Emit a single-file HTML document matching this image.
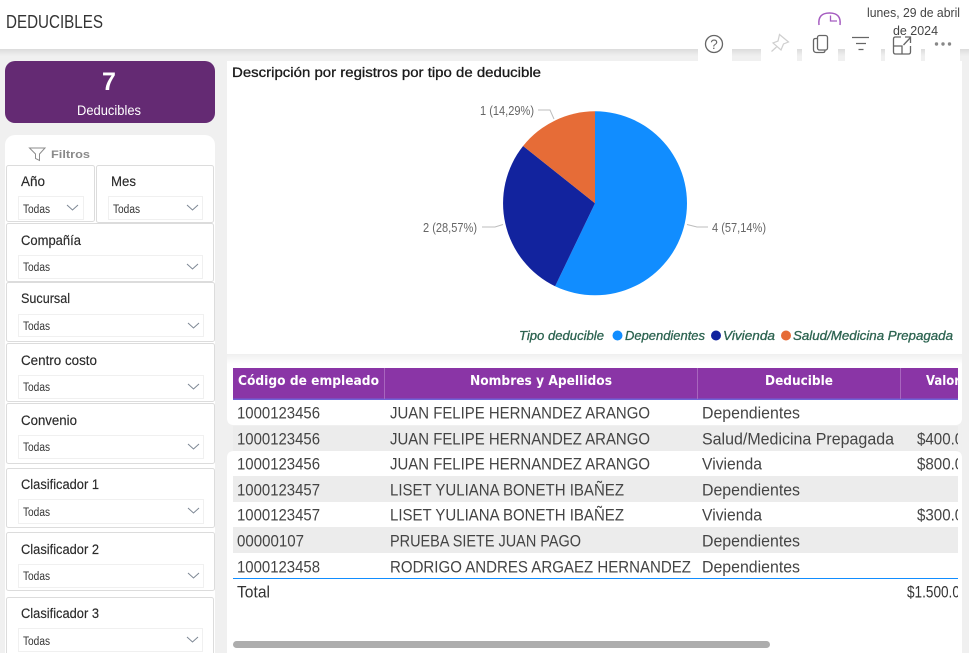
<!DOCTYPE html>
<html lang="es"><head><meta charset="utf-8"><title>Deducibles</title>
<style>
html,body{margin:0;padding:0;background:#f0f0f0;width:969px;height:653px;overflow:hidden}
svg{display:block}
text{font-family:"Liberation Sans",sans-serif}
.r{font-size:16.500px;fill:#444;font-weight:400}
.h{font-family:"DejaVu Sans",sans-serif;font-size:13px;font-weight:700;fill:#fff}
.l{font-size:13.500px;fill:#2a2a2a;stroke:#2a2a2a;stroke-width:.15}
.t{font-size:11.500px;fill:#333}
.c{fill:none;stroke:#7d8794;stroke-width:1}
.s{fill:#fff;stroke:#dcdcdc;stroke-width:1}
.d{fill:#fff;stroke:#f0f0f0;stroke-width:1}
.p{font-size:12.500px;fill:#666}
.g{font-size:13px;font-style:italic;fill:#2c6350;font-weight:400;stroke:#2c6350;stroke-width:.3}
.i{fill:none;stroke:#666;stroke-width:1.300}
</style></head><body>
<svg width="969" height="653" viewBox="0 0 969 653" xmlns="http://www.w3.org/2000/svg">
<defs>
<clipPath id="cv"><rect x="233" y="360" width="725" height="260"/></clipPath>
<linearGradient id="sh" x1="0" y1="0" x2="0" y2="1"><stop offset="0" stop-color="#dcdcdc"/><stop offset="1" stop-color="#f0f0f0"/></linearGradient>
<linearGradient id="sh2" x1="0" y1="0" x2="0" y2="1"><stop offset="0" stop-color="#efefef"/><stop offset="1" stop-color="#ffffff"/></linearGradient>
</defs>
<rect width="969" height="653" fill="#f0f0f0"/>
<rect y="49" width="969" height="7" fill="url(#sh)"/>
<rect width="969" height="49" fill="#fff"/>
<text x="6" y="28" font-size="18.500" fill="#333" textLength="97" lengthAdjust="spacingAndGlyphs">DEDUCIBLES</text>

<!-- toolbar patches -->
<rect x="698" y="30" width="34" height="31" fill="#fff"/>
<rect x="761" y="30" width="36" height="31" fill="#fff"/>
<rect x="802" y="30" width="36" height="31" fill="#fff"/>
<rect x="845" y="30" width="36" height="31" fill="#fff"/>
<rect x="885" y="30" width="36" height="31" fill="#fff"/>
<rect x="925" y="30" width="35" height="31" fill="#fff"/>

<!-- date + clock -->
<text x="867" y="17" font-size="12.500" fill="#444" textLength="93" lengthAdjust="spacingAndGlyphs">lunes, 29 de abril</text>
<text x="893" y="35" font-size="12.500" fill="#444" textLength="45" lengthAdjust="spacingAndGlyphs">de 2024</text>
<path d="M819 25Q817.500 13 829.500 13Q841.500 13 840 25" fill="none" stroke="#a55cc0" stroke-width="1.500"/>
<path d="M830.500 15.500V21H837" fill="none" stroke="#a55cc0" stroke-width="1.300"/>

<!-- toolbar icons -->
<circle cx="714" cy="44" r="8.500" class="i"/>
<text x="714" y="49" font-size="13.500" fill="#666" text-anchor="middle">?</text>
<path d="M779.500 34.500L788.500 42L783.500 44L781 50L773 43L778 41ZM776.500 47L771.500 51.500" fill="none" stroke="#cfcfcf" stroke-width="1.200"/>
<rect x="817.500" y="35.500" width="10" height="14.500" rx="2" class="i"/>
<path d="M817.500 38.500H815.500Q813.500 38.500 813.500 40.500V49.500Q813.500 52.500 816.500 52.500H823Q825 52.500 825 50.500" class="i"/>
<path d="M852 37.500H869M856 43.500H866M858.500 49.500H863.500" class="i"/>
<path d="M901 37H895.500Q893.500 37 893.500 39V52Q893.500 54 895.500 54H908.500Q910.500 54 910.500 52V46M893.500 46H902V54M903.500 45L910.500 37.500M905 37H910.500V43" class="i"/>
<circle cx="936.500" cy="44" r="1.700" fill="#888"/><circle cx="943" cy="44" r="1.700" fill="#888"/><circle cx="949.500" cy="44" r="1.700" fill="#888"/>

<!-- KPI -->
<rect x="5" y="61" width="210" height="62" rx="10" fill="#642a73"/>
<text x="109" y="90" font-size="25" font-weight="700" fill="#fff" text-anchor="middle">7</text>
<text x="77" y="115" font-size="13.500" fill="#fff" textLength="64" lengthAdjust="spacingAndGlyphs">Deducibles</text>

<!-- Filter panel -->
<rect x="5" y="135" width="210" height="530" rx="10" fill="#fff"/>
<path d="M29.500 148H45L39.500 154V160.500L35.500 158.500V154Z" fill="none" stroke="#8c8c8c" stroke-width="1"/>
<text x="51" y="158" font-size="11" font-weight="700" fill="#8a8a8a" textLength="39" lengthAdjust="spacingAndGlyphs">Filtros</text>

<rect x="6.500" y="165.500" width="88" height="56" rx="2" class="s"/>
<text x="21" y="186" class="l" textLength="24" lengthAdjust="spacingAndGlyphs">Año</text>
<rect x="18.500" y="196.500" width="65" height="23" class="d"/>
<text x="23" y="213" class="t" textLength="27" lengthAdjust="spacingAndGlyphs">Todas</text>
<path d="M67 205L72.500 210 78 205" class="c"/>

<rect x="96.500" y="165.500" width="117" height="57" rx="2" class="s"/>
<text x="111" y="186" class="l" textLength="25" lengthAdjust="spacingAndGlyphs">Mes</text>
<rect x="108.500" y="196.500" width="94" height="23" class="d"/>
<text x="113" y="213" class="t" textLength="27" lengthAdjust="spacingAndGlyphs">Todas</text>
<path d="M187 205L192.500 210 198 205" class="c"/>

<rect x="6.500" y="223.500" width="207" height="58" rx="2" class="s"/>
<text x="21" y="245" class="l" textLength="60" lengthAdjust="spacingAndGlyphs">Compañía</text>
<rect x="18.500" y="255.500" width="184" height="23" class="d"/>
<text x="23" y="271" class="t" textLength="27" lengthAdjust="spacingAndGlyphs">Todas</text>
<path d="M187 264L192.500 269 198 264" class="c"/>

<rect x="6.500" y="282.500" width="208" height="59" rx="2" class="s"/>
<text x="21" y="303" class="l" textLength="49" lengthAdjust="spacingAndGlyphs">Sucursal</text>
<rect x="18.500" y="314.500" width="185" height="22" class="d"/>
<text x="23" y="330" class="t" textLength="27" lengthAdjust="spacingAndGlyphs">Todas</text>
<path d="M188 323L193.500 328 199 323" class="c"/>

<rect x="6.500" y="343.500" width="208" height="58" rx="2" class="s"/>
<text x="21" y="365" class="l" textLength="76" lengthAdjust="spacingAndGlyphs">Centro costo</text>
<rect x="18.500" y="375.500" width="185" height="23" class="d"/>
<text x="23" y="391" class="t" textLength="27" lengthAdjust="spacingAndGlyphs">Todas</text>
<path d="M188 384L193.500 389 199 384" class="c"/>

<rect x="6.500" y="403.500" width="208" height="60" rx="2" class="s"/>
<text x="21" y="425" class="l" textLength="56" lengthAdjust="spacingAndGlyphs">Convenio</text>
<rect x="18.500" y="435.500" width="185" height="23" class="d"/>
<text x="23" y="451" class="t" textLength="27" lengthAdjust="spacingAndGlyphs">Todas</text>
<path d="M188 444L193.500 449 199 444" class="c"/>

<rect x="6.500" y="468.500" width="208" height="59" rx="2" class="s"/>
<text x="21" y="489" class="l" textLength="78" lengthAdjust="spacingAndGlyphs">Clasificador 1</text>
<rect x="18.500" y="499.500" width="185" height="24" class="d"/>
<text x="23" y="516" class="t" textLength="27" lengthAdjust="spacingAndGlyphs">Todas</text>
<path d="M188 508L193.500 513 199 508" class="c"/>

<rect x="6.500" y="532.500" width="208" height="58" rx="2" class="s"/>
<text x="21" y="554" class="l" textLength="78" lengthAdjust="spacingAndGlyphs">Clasificador 2</text>
<rect x="18.500" y="564.500" width="185" height="23" class="d"/>
<text x="23" y="580" class="t" textLength="27" lengthAdjust="spacingAndGlyphs">Todas</text>
<path d="M188 573L193.500 578 199 573" class="c"/>

<rect x="6.500" y="597.500" width="207" height="70" rx="2" class="s"/>
<text x="21" y="618" class="l" textLength="78" lengthAdjust="spacingAndGlyphs">Clasificador 3</text>
<rect x="18.500" y="628.500" width="184" height="23" class="d"/>
<text x="23" y="645" class="t" textLength="27" lengthAdjust="spacingAndGlyphs">Todas</text>
<path d="M187 637L192.500 642 198 637" class="c"/>

<!-- Chart panel -->
<rect x="227" y="61" width="735" height="293" fill="#fff"/>
<text x="232" y="77" font-size="13.500" fill="#1a1a1a" stroke="#1a1a1a" stroke-width=".3" textLength="309" lengthAdjust="spacingAndGlyphs">Descripción por registros por tipo de deducible</text>

<path d="M595 203.300V111.300A92 92 0 1 1 555.100 286.200Z" fill="#118dff"/>
<path d="M595 203.300L555.100 286.200A92 92 0 0 1 523.100 146Z" fill="#12239e"/>
<path d="M595 203.300L523.100 146A92 92 0 0 1 595 111.300Z" fill="#e66c37"/>
<path d="M538 110H550L554 119M482 227H495L503 224.500M687 224.500L697 227H708" fill="none" stroke="#bdbdbd" stroke-width="1"/>
<text x="480" y="115" class="p" textLength="54" lengthAdjust="spacingAndGlyphs">1 (14,29%)</text>
<text x="423" y="232" class="p" textLength="54" lengthAdjust="spacingAndGlyphs">2 (28,57%)</text>
<text x="712" y="232" class="p" textLength="54" lengthAdjust="spacingAndGlyphs">4 (57,14%)</text>

<text x="519" y="340" class="g" textLength="85" lengthAdjust="spacingAndGlyphs">Tipo deducible</text>
<circle cx="617.500" cy="335.500" r="5" fill="#118dff"/>
<text x="625" y="340" class="g" textLength="80" lengthAdjust="spacingAndGlyphs">Dependientes</text>
<circle cx="716" cy="335.500" r="5" fill="#12239e"/>
<text x="723" y="340" class="g" textLength="52" lengthAdjust="spacingAndGlyphs">Vivienda</text>
<circle cx="786" cy="335.500" r="5" fill="#e66c37"/>
<text x="793" y="340" class="g" textLength="160" lengthAdjust="spacingAndGlyphs">Salud/Medicina Prepagada</text>

<!-- Table panels -->
<path d="M227 354H962V418Q962 425 955 425H234Q227 425 227 418Z" fill="#fff"/>
<path d="M234 451H955Q962 451 962 458V653H227V458Q227 451 234 451Z" fill="#fff"/>
<rect x="227" y="354" width="735" height="10" fill="url(#sh2)"/>

<!-- Rows bg -->
<rect x="233" y="426" width="725" height="25" fill="#ececec"/>
<rect x="233" y="476" width="725" height="26" fill="#ececec"/>
<rect x="233" y="527" width="725" height="26" fill="#ececec"/>

<!-- Header -->
<rect x="233" y="368" width="725" height="31" fill="#8a35a6"/>
<rect x="233" y="398.500" width="725" height="1.500" fill="#6f63d6"/>
<path d="M384.500 368V399M697.500 368V399M900.500 368V399" stroke="#a866be" stroke-width="1"/>

<g clip-path="url(#cv)">
<text x="238" y="385" class="h" textLength="141" lengthAdjust="spacingAndGlyphs">Código de empleado</text>
<text x="470" y="385" class="h" textLength="142" lengthAdjust="spacingAndGlyphs">Nombres y Apellidos</text>
<text x="765" y="385" class="h" textLength="68" lengthAdjust="spacingAndGlyphs">Deducible</text>
<text x="926" y="385" class="h" textLength="34" lengthAdjust="spacingAndGlyphs">Valor</text>

<text x="237" y="418.500" class="r" textLength="83" lengthAdjust="spacingAndGlyphs">1000123456</text>
<text x="390" y="418.500" class="r" textLength="260" lengthAdjust="spacingAndGlyphs">JUAN FELIPE HERNANDEZ ARANGO</text>
<text x="702" y="418.500" class="r" textLength="98" lengthAdjust="spacingAndGlyphs">Dependientes</text>

<text x="237" y="444.500" class="r" textLength="83" lengthAdjust="spacingAndGlyphs">1000123456</text>
<text x="390" y="444.500" class="r" textLength="260" lengthAdjust="spacingAndGlyphs">JUAN FELIPE HERNANDEZ ARANGO</text>
<text x="702" y="444.500" class="r" textLength="192" lengthAdjust="spacingAndGlyphs">Salud/Medicina Prepagada</text>
<text x="917" y="444.500" class="r" textLength="63" lengthAdjust="spacingAndGlyphs">$400.000</text>

<text x="237" y="469.500" class="r" textLength="83" lengthAdjust="spacingAndGlyphs">1000123456</text>
<text x="390" y="469.500" class="r" textLength="260" lengthAdjust="spacingAndGlyphs">JUAN FELIPE HERNANDEZ ARANGO</text>
<text x="702" y="469.500" class="r" textLength="60" lengthAdjust="spacingAndGlyphs">Vivienda</text>
<text x="917" y="469.500" class="r" textLength="63" lengthAdjust="spacingAndGlyphs">$800.000</text>

<text x="237" y="495.500" class="r" textLength="83" lengthAdjust="spacingAndGlyphs">1000123457</text>
<text x="390" y="495.500" class="r" textLength="234" lengthAdjust="spacingAndGlyphs">LISET YULIANA BONETH IBAÑEZ</text>
<text x="702" y="495.500" class="r" textLength="98" lengthAdjust="spacingAndGlyphs">Dependientes</text>

<text x="237" y="520.500" class="r" textLength="83" lengthAdjust="spacingAndGlyphs">1000123457</text>
<text x="390" y="520.500" class="r" textLength="234" lengthAdjust="spacingAndGlyphs">LISET YULIANA BONETH IBAÑEZ</text>
<text x="702" y="520.500" class="r" textLength="60" lengthAdjust="spacingAndGlyphs">Vivienda</text>
<text x="917" y="520.500" class="r" textLength="63" lengthAdjust="spacingAndGlyphs">$300.000</text>

<text x="237" y="546.500" class="r" textLength="67" lengthAdjust="spacingAndGlyphs">00000107</text>
<text x="390" y="546.500" class="r" textLength="191" lengthAdjust="spacingAndGlyphs">PRUEBA SIETE JUAN PAGO</text>
<text x="702" y="546.500" class="r" textLength="98" lengthAdjust="spacingAndGlyphs">Dependientes</text>

<text x="237" y="572.500" class="r" textLength="83" lengthAdjust="spacingAndGlyphs">1000123458</text>
<text x="390" y="572.500" class="r" textLength="301" lengthAdjust="spacingAndGlyphs">RODRIGO ANDRES ARGAEZ HERNANDEZ</text>
<text x="702" y="572.500" class="r" textLength="98" lengthAdjust="spacingAndGlyphs">Dependientes</text>

<text x="237" y="597.500" font-size="17" fill="#333" textLength="33" lengthAdjust="spacingAndGlyphs">Total</text>
<text x="907" y="597.500" font-size="17" fill="#333" textLength="68" lengthAdjust="spacingAndGlyphs">$1.500.000</text>
</g>
<rect x="233" y="578" width="725" height="1" fill="#118dff"/>
<rect x="233" y="641" width="537" height="7" rx="3.500" fill="#adadad"/>
</svg>
</body></html>
